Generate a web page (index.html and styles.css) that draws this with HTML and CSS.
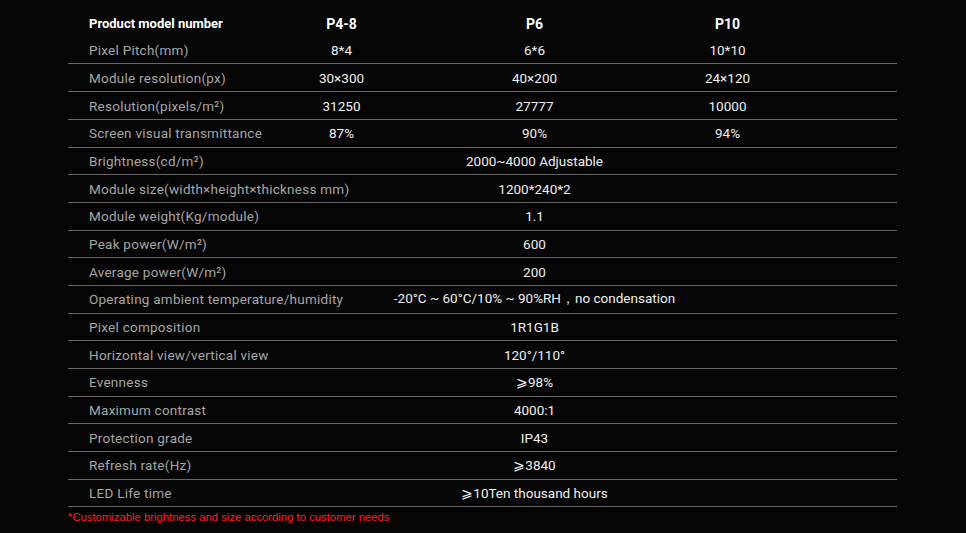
FILE: index.html
```html
<!DOCTYPE html>
<html>
<head>
<meta charset="utf-8">
<link rel="stylesheet" href="styles.css">
</head>
<body>
<div class="sheet">
  <div class="row head">
    <div class="label">Product model number</div>
    <div class="cell">P4-8</div>
    <div class="cell">P6</div>
    <div class="cell">P10</div>
  </div>
  <div class="row">
    <div class="label">Pixel Pitch(mm)</div>
    <div class="cell">8*4</div>
    <div class="cell">6*6</div>
    <div class="cell">10*10</div>
  </div>
  <div class="row">
    <div class="label">Module resolution(px)</div>
    <div class="cell">30×300</div>
    <div class="cell">40×200</div>
    <div class="cell">24×120</div>
  </div>
  <div class="row">
    <div class="label">Resolution(pixels/m²)</div>
    <div class="cell">31250</div>
    <div class="cell">27777</div>
    <div class="cell">10000</div>
  </div>
  <div class="row">
    <div class="label">Screen visual transmittance</div>
    <div class="cell">87%</div>
    <div class="cell">90%</div>
    <div class="cell">94%</div>
  </div>
  <div class="row">
    <div class="label">Brightness(cd/m²)</div>
    <div class="cell span">2000~4000 Adjustable</div>
  </div>
  <div class="row">
    <div class="label">Module size(width×height×thickness mm)</div>
    <div class="cell span">1200*240*2</div>
  </div>
  <div class="row">
    <div class="label">Module weight(Kg/module)</div>
    <div class="cell span">1.1</div>
  </div>
  <div class="row">
    <div class="label">Peak power(W/m²)</div>
    <div class="cell span">600</div>
  </div>
  <div class="row">
    <div class="label">Average power(W/m²)</div>
    <div class="cell span">200</div>
  </div>
  <div class="row">
    <div class="label">Operating ambient temperature/humidity</div>
    <div class="cell span">-20°C ~ 60°C/10% ~ 90%RH，no condensation</div>
  </div>
  <div class="row">
    <div class="label">Pixel composition</div>
    <div class="cell span">1R1G1B</div>
  </div>
  <div class="row">
    <div class="label">Horizontal view/vertical view</div>
    <div class="cell span">120°/110°</div>
  </div>
  <div class="row">
    <div class="label">Evenness</div>
    <div class="cell span">⩾98%</div>
  </div>
  <div class="row">
    <div class="label">Maximum contrast</div>
    <div class="cell span">4000:1</div>
  </div>
  <div class="row">
    <div class="label">Protection grade</div>
    <div class="cell span">IP43</div>
  </div>
  <div class="row">
    <div class="label">Refresh rate(Hz)</div>
    <div class="cell span">⩾3840</div>
  </div>
  <div class="row">
    <div class="label">LED Life time</div>
    <div class="cell span">⩾10Ten thousand hours</div>
  </div>
  <p class="note">*Customizable brightness and size according to customer needs</p>
</div>
</body>
</html>
```
FILE: styles.css
```css
html, body {
  margin: 0;
  padding: 0;
  background: #050505;
}
body {
  font-family: "Roboto", "Noto Sans", sans-serif;
}
.sheet {
  width: 829px;
  margin-left: 68px;
  padding-top: 11px;
}
.row {
  display: grid;
  grid-template-columns: 177px 193px 193px 193px 1fr;
  align-items: center;
  height: 27.7px;
  box-sizing: border-box;
  border-bottom: 1px solid #666;
  font-size: 13.5px;
  color: #f0f0f0;
}
.row.head {
  height: 25.8px;
  border-bottom: none;
}
.label {
  padding-left: 21px;
  white-space: nowrap;
  color: #a6a6a6;
  letter-spacing: 0.25px;
}
.cell {
  text-align: center;
  white-space: nowrap;
}
.cell.span {
  grid-column: 2 / 5;
}
.head .label {
  color: #fff;
  font-weight: 700;
  font-size: 13px;
  letter-spacing: 0;
}
.head .cell {
  font-weight: 700;
  font-size: 14px;
  color: #fff;
}
.note {
  margin: 4px 0 0 0;
  font-family: "Liberation Sans", Arial, sans-serif;
  font-size: 11.3px;
  color: #ff1f1f;
}
```
